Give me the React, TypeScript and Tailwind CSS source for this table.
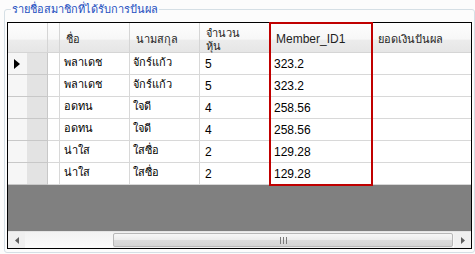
import React from "react";

type Member = { first: string; last: string; shares: string; dividend: string };

const members: Member[] = [
  { first: "พลาเดช", last: "จักร์แก้ว", shares: "5", dividend: "323.2" },
  { first: "พลาเดช", last: "จักร์แก้ว", shares: "5", dividend: "323.2" },
  { first: "อดทน", last: "ใจดี", shares: "4", dividend: "258.56" },
  { first: "อดทน", last: "ใจดี", shares: "4", dividend: "258.56" },
  { first: "น่าใส", last: "ใสซื่อ", shares: "2", dividend: "129.28" },
  { first: "น่าใส", last: "ใสซื่อ", shares: "2", dividend: "129.28" },
];

const cols = "grid grid-cols-[40px_12px_70px_70px_70px_102px_99px]";
const headBg =
  "bg-[linear-gradient(to_bottom,#fefefe_0%,#f7f7f7_55%,#ececec_60%,#e6e6e6_100%)]";
const headCell = `${headBg} border-r border-b border-[#d5d5d5] flex items-center pl-[6px] pt-[4px] text-[11px] leading-[13px] text-[#1e1e1e]`;
const cell =
  "h-[22px] border-r border-b border-[#d8d8d8] bg-white flex items-center pl-[3px] text-[11px] text-black";

export default function App() {
  return (
    <div
      className="w-[475px] h-[254px] bg-[#fcfcfc] relative overflow-hidden"
      style={{ fontFamily: "Tahoma, 'DejaVu Sans', 'Liberation Sans', sans-serif" }}
    >
      <fieldset className="absolute left-[4px] top-[3px] w-[471px] h-[250px] border border-[#d5dfe5] rounded-[3px] px-[2px] pb-[4px]">
        <legend className="ml-[4px] px-[1px] text-[11px] leading-[13px] text-[#1d4fc0]">
          รายชื่อสมาชิกที่ได้รับการปันผล
        </legend>
      </fieldset>

      {/* data grid */}
      <div className="absolute left-[7px] top-[22px] w-[465px] h-[227px] border border-black flex flex-col bg-[#808080]">
        <div className={cols}>
          <div className={`${headCell} h-[30px]`} />
          <div className={`${headCell} h-[30px]`} />
          <div className={`${headCell} h-[30px]`}>ชื่อ</div>
          <div className={`${headCell} h-[30px]`}>นามสกุล</div>
          <div className={`${headCell} h-[30px] flex-col items-start justify-center`}>
            <span>จำนวน</span>
            <span>หุ้น</span>
          </div>
          <div className={`${headCell} h-[30px] text-[12px]`} style={{ fontFamily: "'Liberation Sans', sans-serif" }}>
            Member_ID1
          </div>
          <div className={`${headCell} h-[30px] border-r-0`}>ยอดเงินปันผล</div>

          {members.map((m, i) => (
            <React.Fragment key={i}>
              <div className="h-[22px] border-r border-b border-[#c8c8c8] bg-[linear-gradient(to_right,#f6f6f6_50%,#e3e3e3_50%)] flex items-center pl-[6px]">
                {i === 0 && (
                  <svg width="6" height="10" viewBox="0 0 6 10">
                    <path d="M0 0 L6 5 L0 10 Z" fill="#000" />
                  </svg>
                )}
              </div>
              <div className={cell} />
              <div className={`${cell} pl-[4px]`}>{m.first}</div>
              <div className={cell}>{m.last}</div>
              <div className={`${cell} pl-[5px] text-[12px]`} style={{ fontFamily: "'Liberation Sans', sans-serif" }}>
                {m.shares}
              </div>
              <div className={`${cell} pl-[4px] text-[12px]`} style={{ fontFamily: "'Liberation Sans', sans-serif" }}>
                {m.dividend}
              </div>
              <div className={`${cell} border-r-0`} />
            </React.Fragment>
          ))}
        </div>

        <div className="flex-1" />

        {/* horizontal scroll bar */}
        <div className="h-[17px] flex bg-[#f0f0f0] border-t border-[#e4e4e4]">
          <div className="w-[17px] flex items-center justify-center">
            <svg width="4" height="7" viewBox="0 0 4 7">
              <path d="M4 0 L0 3.5 L4 7 Z" fill="#606060" />
            </svg>
          </div>
          <div className="w-[88px] bg-[linear-gradient(to_bottom,#f2f2f2,#fbfbfb)]" />
          <div className="w-[340px] my-[1px] rounded-[2px] border border-[#b8b8b8] bg-[linear-gradient(to_bottom,#f7f7f7_0%,#ececec_50%,#dcdcdc_51%,#d4d4d4_100%)] flex items-center justify-center">
            <svg width="7" height="7" viewBox="0 0 7 7">
              <path d="M0.5 0 V7 M3.5 0 V7 M6.5 0 V7" stroke="#7a7a7a" strokeWidth="1" />
            </svg>
          </div>
          <div className="flex-1 bg-[linear-gradient(to_bottom,#f2f2f2,#fbfbfb)]" />
          <div className="w-[17px] flex items-center justify-center">
            <svg width="4" height="7" viewBox="0 0 4 7">
              <path d="M0 0 L4 3.5 L0 7 Z" fill="#606060" />
            </svg>
          </div>
        </div>
      </div>

      {/* highlighted column outline */}
      <div className="absolute left-[269px] top-[22px] w-[104px] h-[164px] border-2 border-[#c00000]" />
    </div>
  );
}
